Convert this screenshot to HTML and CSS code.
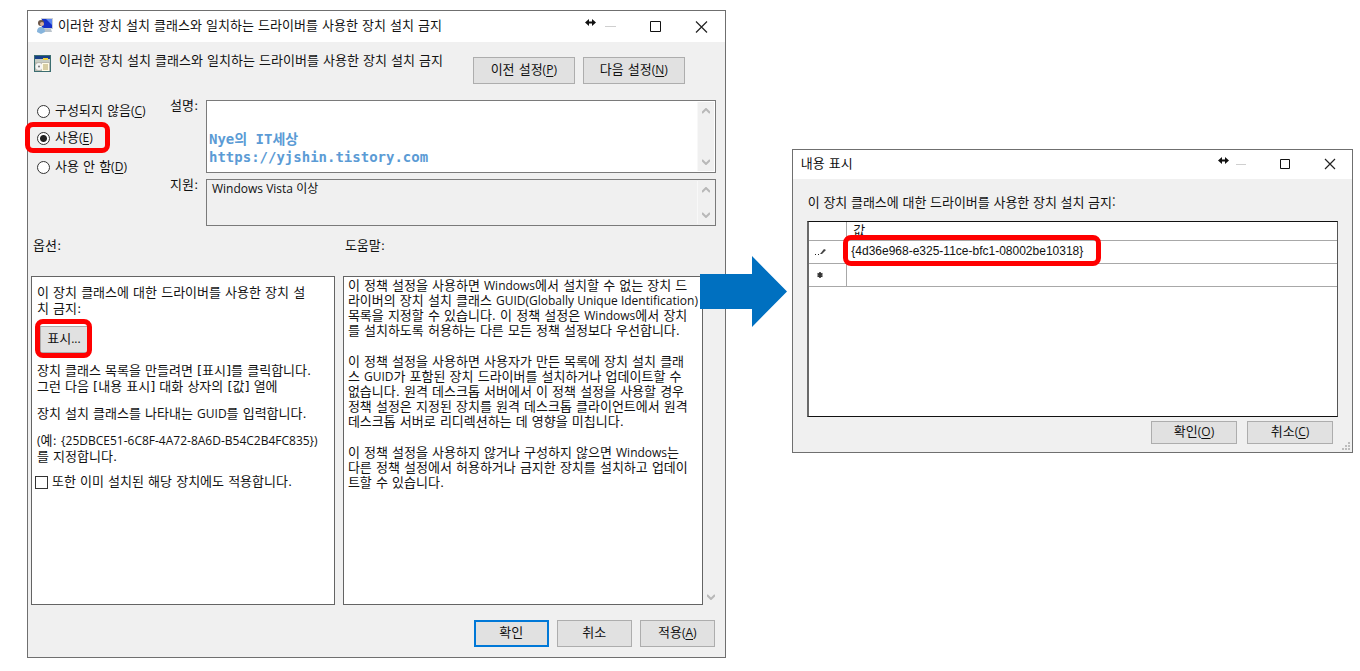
FILE: index.html
```html
<!DOCTYPE html>
<html lang="ko">
<head>
<meta charset="utf-8">
<title>이러한 장치 설치 클래스와 일치하는 드라이버를 사용한 장치 설치 금지</title>
<link rel="stylesheet" href="styles.css">
</head>
<body>
<main class="stage">
  <section class="dialog policy" aria-labelledby="policy-title">
    <header class="titlebar">
      <svg class="app-icon" width="18" height="18" viewBox="0 0 18 18" aria-hidden="true">
        <rect x="5" y="1" width="12" height="11" fill="#c9ced6"/>
        <rect x="6" y="2" width="10" height="9" fill="#1530c8"/>
        <path d="M10 2h6v6z" fill="#5d86f0"/>
        <path d="M8 12h7l1 3H8z" fill="#b9c3cc"/>
        <circle cx="5" cy="6" r="3" fill="#6b5548"/>
        <circle cx="6" cy="7" r="2" fill="#d9b09a"/>
        <path d="M1 15c0-4 2-5 4-5s4 1 4 5l-4 2z" fill="#86b4dc"/>
      </svg>
      <h1 class="title" id="policy-title">이러한 장치 설치 클래스와 일치하는 드라이버를 사용한 장치 설치 금지</h1>
      <div class="controls">
        <button class="control" type="button" aria-label="최소화"><svg width="44" height="30" viewBox="0 0 44 30"><path d="M17 14.500h11" stroke="#cfcfcf"/><path d="M-3 10.500l4-3.500v2.500h3V7l4 3.500L4 14v-2.500H1V14z" fill="#111"/></svg></button>
        <button class="control" type="button" aria-label="최대화"><svg width="44" height="30" viewBox="0 0 44 30"><path d="M16.500 9.500h10v10h-10z" fill="none" stroke="#111"/></svg></button>
        <button class="control" type="button" aria-label="닫기"><svg width="44" height="30" viewBox="0 0 44 30"><path d="M16 9.500l11 11m0-11l-11 11" fill="none" stroke="#222" stroke-width="1.200"/></svg></button>
      </div>
    </header>

    <div class="heading">
      <svg width="17" height="17" viewBox="0 0 17 17" aria-hidden="true">
        <rect width="17" height="17" fill="#3b6d70"/>
        <rect x="1" y="1" width="15" height="3" fill="#173f86"/>
        <rect x="1" y="4" width="15" height="3" fill="#c8cdc4"/>
        <rect x="9" y="3" width="5" height="2" fill="#f2d33b"/>
        <rect x="1" y="7" width="15" height="9" fill="#b9b9b0"/>
        <circle cx="5" cy="11.500" r="3.500" fill="#f4f4f4"/><circle cx="5" cy="11.500" r="1" fill="#777"/>
        <rect x="8" y="8" width="7" height="8" fill="#fffbe6"/>
        <path d="M9 10h5M9 12h5M9 14h5" stroke="#b0a060"/>
      </svg>
      <p class="heading-text">이러한 장치 설치 클래스와 일치하는 드라이버를 사용한 장치 설치 금지</p>
      <div class="heading-buttons">
        <button class="btn btn-wide" type="button">이전 설정<span class="latin">(<u>P</u>)</span></button>
        <button class="btn btn-wide" type="button">다음 설정<span class="latin">(<u>N</u>)</span></button>
      </div>
    </div>

    <div class="settings">
      <div class="states" role="radiogroup" aria-label="상태">
        <label class="state"><input type="radio" name="state">구성되지 않음<span class="latin">(<u>C</u>)</span></label>
        <label class="state"><input type="radio" name="state" checked>사용<span class="latin">(<u>E</u>)</span><span class="mark mark-state"></span></label>
        <label class="state"><input type="radio" name="state">사용 안 함<span class="latin">(<u>D</u>)</span></label>
      </div>
      <div class="fields">
        <label class="field-label" for="comment">설명:</label>
        <div class="field">
          <textarea class="comment" id="comment" spellcheck="false">Nye의 IT세상
https://yjshin.tistory.com</textarea>
          <span class="scroll"><svg width="8" height="6" viewBox="0 0 8 6"><path d="M0 5l4-4 4 4" /></svg><svg width="8" height="6" viewBox="0 0 8 6"><path d="M0 1l4 4 4-4"/></svg></span>
        </div>
        <label class="field-label" for="support">지원:</label>
        <div class="field field-readonly">
          <textarea class="support" id="support" readonly>Windows Vista 이상</textarea>
          <span class="scroll"><svg width="8" height="6" viewBox="0 0 8 6"><path d="M0 5l4-4 4 4" /></svg><svg width="8" height="6" viewBox="0 0 8 6"><path d="M0 1l4 4 4-4"/></svg></span>
        </div>
      </div>
    </div>

    <div class="panes">
      <h2 class="pane-title">옵션:</h2>
      <h2 class="pane-title">도움말:</h2>
      <div class="pane options">
        <p>이 장치 클래스에 대한 드라이버를 사용한 장치 설<br>치 금지:</p>
        <div class="show"><button class="btn btn-show" type="button">표시<span class="latin">...</span></button><span class="mark mark-show"></span></div>
        <p>장치 클래스 목록을 만들려면 [표시]를 클릭합니다.<br>그런 다음 [내용 표시] 대화 상자의 [값] 열에</p>
        <p>장치 설치 클래스를 나타내는 <span class="latin">GUID</span>를 입력합니다.</p>
        <p><span class="latin">(</span>예: <span class="latin">{25DBCE51-6C8F-4A72-8A6D-B54C2B4FC835})</span><br>를 지정합니다.</p>
        <label class="apply"><input type="checkbox">또한 이미 설치된 해당 장치에도 적용합니다.</label>
      </div>
      <div class="help">
        <div class="pane help-text">
          <p>이 정책 설정을 사용하면 <span class="latin">Windows</span>에서 설치할 수 없는 장치 드<br>라이버의 장치 설치 클래스 <span class="latin">GUID(Globally Unique Identification)</span><br>목록을 지정할 수 있습니다. 이 정책 설정은 <span class="latin">Windows</span>에서 장치<br>를 설치하도록 허용하는 다른 모든 정책 설정보다 우선합니다.</p>
          <p>이 정책 설정을 사용하면 사용자가 만든 목록에 장치 설치 클래<br>스 <span class="latin">GUID</span>가 포함된 장치 드라이버를 설치하거나 업데이트할 수<br>없습니다. 원격 데스크톱 서버에서 이 정책 설정을 사용할 경우<br>정책 설정은 지정된 장치를 원격 데스크톱 클라이언트에서 원격<br>데스크톱 서버로 리디렉션하는 데 영향을 미칩니다.</p>
          <p>이 정책 설정을 사용하지 않거나 구성하지 않으면 <span class="latin">Windows</span>는<br>다른 정책 설정에서 허용하거나 금지한 장치를 설치하고 업데이<br>트할 수 있습니다.</p>
        </div>
        <span class="help-scroll"><svg width="8" height="6" viewBox="0 0 8 6"><path d="M0 1l4 4 4-4"/></svg></span>
      </div>
    </div>

    <footer class="footer">
      <button class="btn btn-default" type="button">확인</button>
      <button class="btn" type="button">취소</button>
      <button class="btn" type="button">적용<span class="latin">(<u>A</u>)</span></button>
    </footer>
  </section>

  <div class="link">
    <svg class="arrow" width="88" height="72" viewBox="0 0 88 72" aria-hidden="true"><path d="M0 18h52V0l35 35.500L52 71V53H0z" fill="#0070c0"/></svg>
  </div>

  <section class="dialog contents" aria-labelledby="contents-title">
    <header class="titlebar">
      <h1 class="title" id="contents-title">내용 표시</h1>
      <div class="controls">
        <button class="control" type="button" aria-label="최소화"><svg width="44" height="30" viewBox="0 0 44 30"><path d="M18 14.500h10" stroke="#cfcfcf"/><path d="M0 10.500l4-3.500v2.500h3V7l4 3.500L7 14v-2.500H4V14z" fill="#111"/></svg></button>
        <button class="control" type="button" aria-label="최대화"><svg width="44" height="30" viewBox="0 0 44 30"><path d="M17.500 9.500h9v9h-9z" fill="none" stroke="#111"/></svg></button>
        <button class="control" type="button" aria-label="닫기"><svg width="44" height="30" viewBox="0 0 44 30"><path d="M17 9l10 10m0-10l-10 10" fill="none" stroke="#222" stroke-width="1.200"/></svg></button>
      </div>
    </header>
    <p class="caption" id="caption">이 장치 클래스에 대한 드라이버를 사용한 장치 설치 금지:</p>
    <div class="sheet">
      <table class="values" aria-labelledby="caption">
        <thead><tr><th class="handle"></th><th>값</th></tr></thead>
        <tbody>
          <tr><td class="handle"><svg width="12" height="8" viewBox="0 0 12 8" aria-hidden="true"><path d="M0 6h1v1H0zM3 6h1v1H3z" fill="#222"/><path d="M5 6l4-5 2 1-4 4z" fill="#444"/></svg></td><td class="guid">{4d36e968-e325-11ce-bfc1-08002be10318}<span class="mark mark-guid"></span></td></tr>
          <tr><td class="handle"><svg width="12" height="8" viewBox="0 0 12 8" aria-hidden="true"><path d="M5 1v6M2.500 2.500l5 3M7.500 2.500l-5 3" stroke="#333" stroke-width="1.600"/></svg></td><td></td></tr>
        </tbody>
      </table>
    </div>
    <footer class="contents-footer">
      <button class="btn" type="button">확인<span class="latin">(<u>O</u>)</span></button>
      <button class="btn" type="button">취소<span class="latin">(<u>C</u>)</span></button>
      <svg class="grip" width="9" height="9" viewBox="0 0 9 9" aria-hidden="true"><path d="M6 0h2v2H6zM3 3h2v2H3zM6 3h2v2H6zM0 6h2v2H0zM3 6h2v2H3zM6 6h2v2H6z" fill="#bdbdbd"/></svg>
    </footer>
  </section>
</main>
</body>
</html>
```
FILE: styles.css
```css
* { box-sizing: border-box; }

body {
  margin: 0;
  background: #fff;
  color: #111;
  font: 13px/16px "DejaVu Sans", "Noto Sans CJK KR", sans-serif;
}

h1, h2, p { margin: 0; font-size: 13px; font-weight: 400; }

button, textarea { font: inherit; color: inherit; }

.latin { font-family: "Open Sans", sans-serif; font-size: 12px; line-height: 12px; }

u { text-underline-offset: 2px; }

.stage {
  display: flex;
  align-items: flex-start;
  padding: 10px 7px 0 27px;
}

.dialog {
  min-width: 0;
  border: 1px solid #6f6f6f;
  background: #f0f0f0;
  white-space: nowrap;
}

.policy { flex: 699 1 0; }
.contents { flex: 561 1 0; margin-top: 139px; }

/* title bars */
.titlebar {
  display: flex;
  align-items: center;
  height: 31px;
  padding: 0 0 2px 8px;
  background: #fff;
}
.contents .titlebar { height: 29px; }
.app-icon { margin-right: 4px; }
.title { flex: 1; min-width: 0; }
.controls { display: flex; }
.control {
  width: 46px;
  height: 28px;
  padding: 0;
  border: 0;
  background: none;
  display: grid;
  place-items: center;
}
.control svg { overflow: visible; }
.contents .control { width: 45px; }

/* buttons */
.btn {
  width: 75px;
  height: 27px;
  padding: 0 0 1px;
  border: 1px solid #adadad;
  background: #e1e1e1;
  line-height: 16px;
  white-space: nowrap;
}
.btn-wide { width: 102px; }
.btn-show { width: 48px; }
.btn-default { border: 2px solid #0078d7; }

/* heading row */
.heading {
  display: flex;
  align-items: flex-start;
  gap: 8px;
  padding: 13px 40px 16px 6px;
}
.heading-text { flex: 1; min-width: 0; margin-top: -2px; }
.heading-buttons { display: flex; gap: 8px; padding-top: 2px; }

/* state and text fields */
.settings {
  display: grid;
  grid-template-columns: 133px minmax(0, 1fr);
  padding: 0 9px;
}
.state {
  position: relative;
  display: flex;
  align-items: center;
  height: 28px;
  line-height: 20px;
}
.state:first-child { height: 22px; }
.state:nth-child(2) { height: 32px; }
.state:last-child { height: 26px; }
.state input {
  appearance: none;
  width: 13px;
  height: 13px;
  margin: 0 5px 0 0;
  border: 1px solid #333;
  border-radius: 50%;
  background: #fff;
}
.state input:checked { background: radial-gradient(circle, #222 0 3px, #fff 4px); }

.fields {
  display: grid;
  grid-template-columns: 36px minmax(0, 1fr);
  row-gap: 6px;
}
.field-label { line-height: 12px; }
.field {
  display: flex;
  height: 73px;
  padding: 1px;
  border: 1px solid #7a7a7a;
  background: #fff;
}
.field-readonly { height: 47px; background: #f0f0f0; }
.field textarea {
  flex: 1;
  min-width: 0;
  border: 0;
  padding: 0 4px;
  background: none;
  resize: none;
  overflow: hidden;
  outline: 0;
}
.field .comment {
  padding: 28px 1px 0;
  color: #5b9bd5;
  font: bold 14px/18px "DejaVu Sans Mono", "Noto Sans CJK KR", monospace;
}
.field .support { font-family: "Open Sans", "Noto Sans CJK KR", sans-serif; font-size: 12px; }
.scroll {
  display: flex;
  flex-direction: column;
  justify-content: space-between;
  align-items: center;
  width: 17px;
  padding: 6px 0;
  background: #f0f0f0;
  border-left: 1px solid #f8f8f8;
}
.scroll path, .help-scroll path { fill: none; stroke: #b8b8b8; stroke-width: 2; }

/* options and help */
.panes {
  display: grid;
  grid-template-columns: minmax(0, 304fr) minmax(0, 376fr);
  column-gap: 8px;
  padding: 10px 6px 0 3px;
}
.pane-title { height: 40px; padding: 2px; }
.pane {
  min-height: 329px;
  border: 1px solid #646464;
  background: #fff;
}
.options { padding: 8px 5px; }
.options p { margin-bottom: 11px; }
.options p:first-child { margin-bottom: 0; }
.show { position: relative; display: flex; padding: 9px 3px 10px; }
.apply { display: flex; align-items: center; margin: -2px; }
.apply input {
  appearance: none;
  width: 13px;
  height: 13px;
  margin: 0 4px 0 0;
  border: 1px solid #333;
  background: #fff;
}
.help { display: flex; }
.help-text { flex: 1; min-width: 0; padding: 1px 4px; line-height: 15px; }
.help-text p + p { margin-top: 16px; }
.help-scroll { display: flex; align-items: flex-end; justify-content: center; width: 16px; padding-bottom: 5px; }

.footer { display: flex; justify-content: flex-end; gap: 8px; padding: 15px 10px 10px; }

/* red highlight frames */
.mark {
  position: absolute;
  border: 5px solid #f00;
  border-radius: 8px;
  pointer-events: none;
}
.mark-state { left: -12px; top: 0; width: 85px; height: 31px; }
.mark-show { left: -2px; top: 2px; width: 57px; height: 39px; }
.mark-guid { left: -4px; top: -6px; width: 258px; height: 31px; }

/* arrow between the dialogs */
.link { position: relative; flex: 0 0 66px; }
.arrow { position: absolute; left: -26px; top: 246px; }

/* contents dialog */
.caption { padding: 15px 15px 11px; font-family: "Noto Sans CJK KR", sans-serif; }
.sheet {
  min-height: 196px;
  margin: 0 14px 4px;
  border: 1px solid #111;
  border-left: 2px solid #6a6a6a;
  border-right-color: #555;
  background: #fff;
}
.values { width: 100%; border-collapse: collapse; table-layout: fixed; }
.values th, .values td {
  position: relative;
  height: 23px;
  padding: 0 4px;
  border-bottom: 1px solid #a8a8a8;
  text-align: left;
  font-weight: 400;
}
.values th { height: 18px; padding-left: 6px; line-height: 16px; }
.values .handle { width: 38px; padding: 0 6px; border-right: 1px solid #a8a8a8; }
.values .guid { font: 12px/16px "Liberation Sans", Arial, sans-serif; padding-bottom: 2px; }
.contents-footer {
  position: relative;
  display: flex;
  justify-content: flex-end;
  gap: 10px;
  padding: 0 19px 8px;
}
.contents-footer .btn { width: 86px; height: 23px; }
.grip { position: absolute; right: 1px; bottom: 1px; }
```
